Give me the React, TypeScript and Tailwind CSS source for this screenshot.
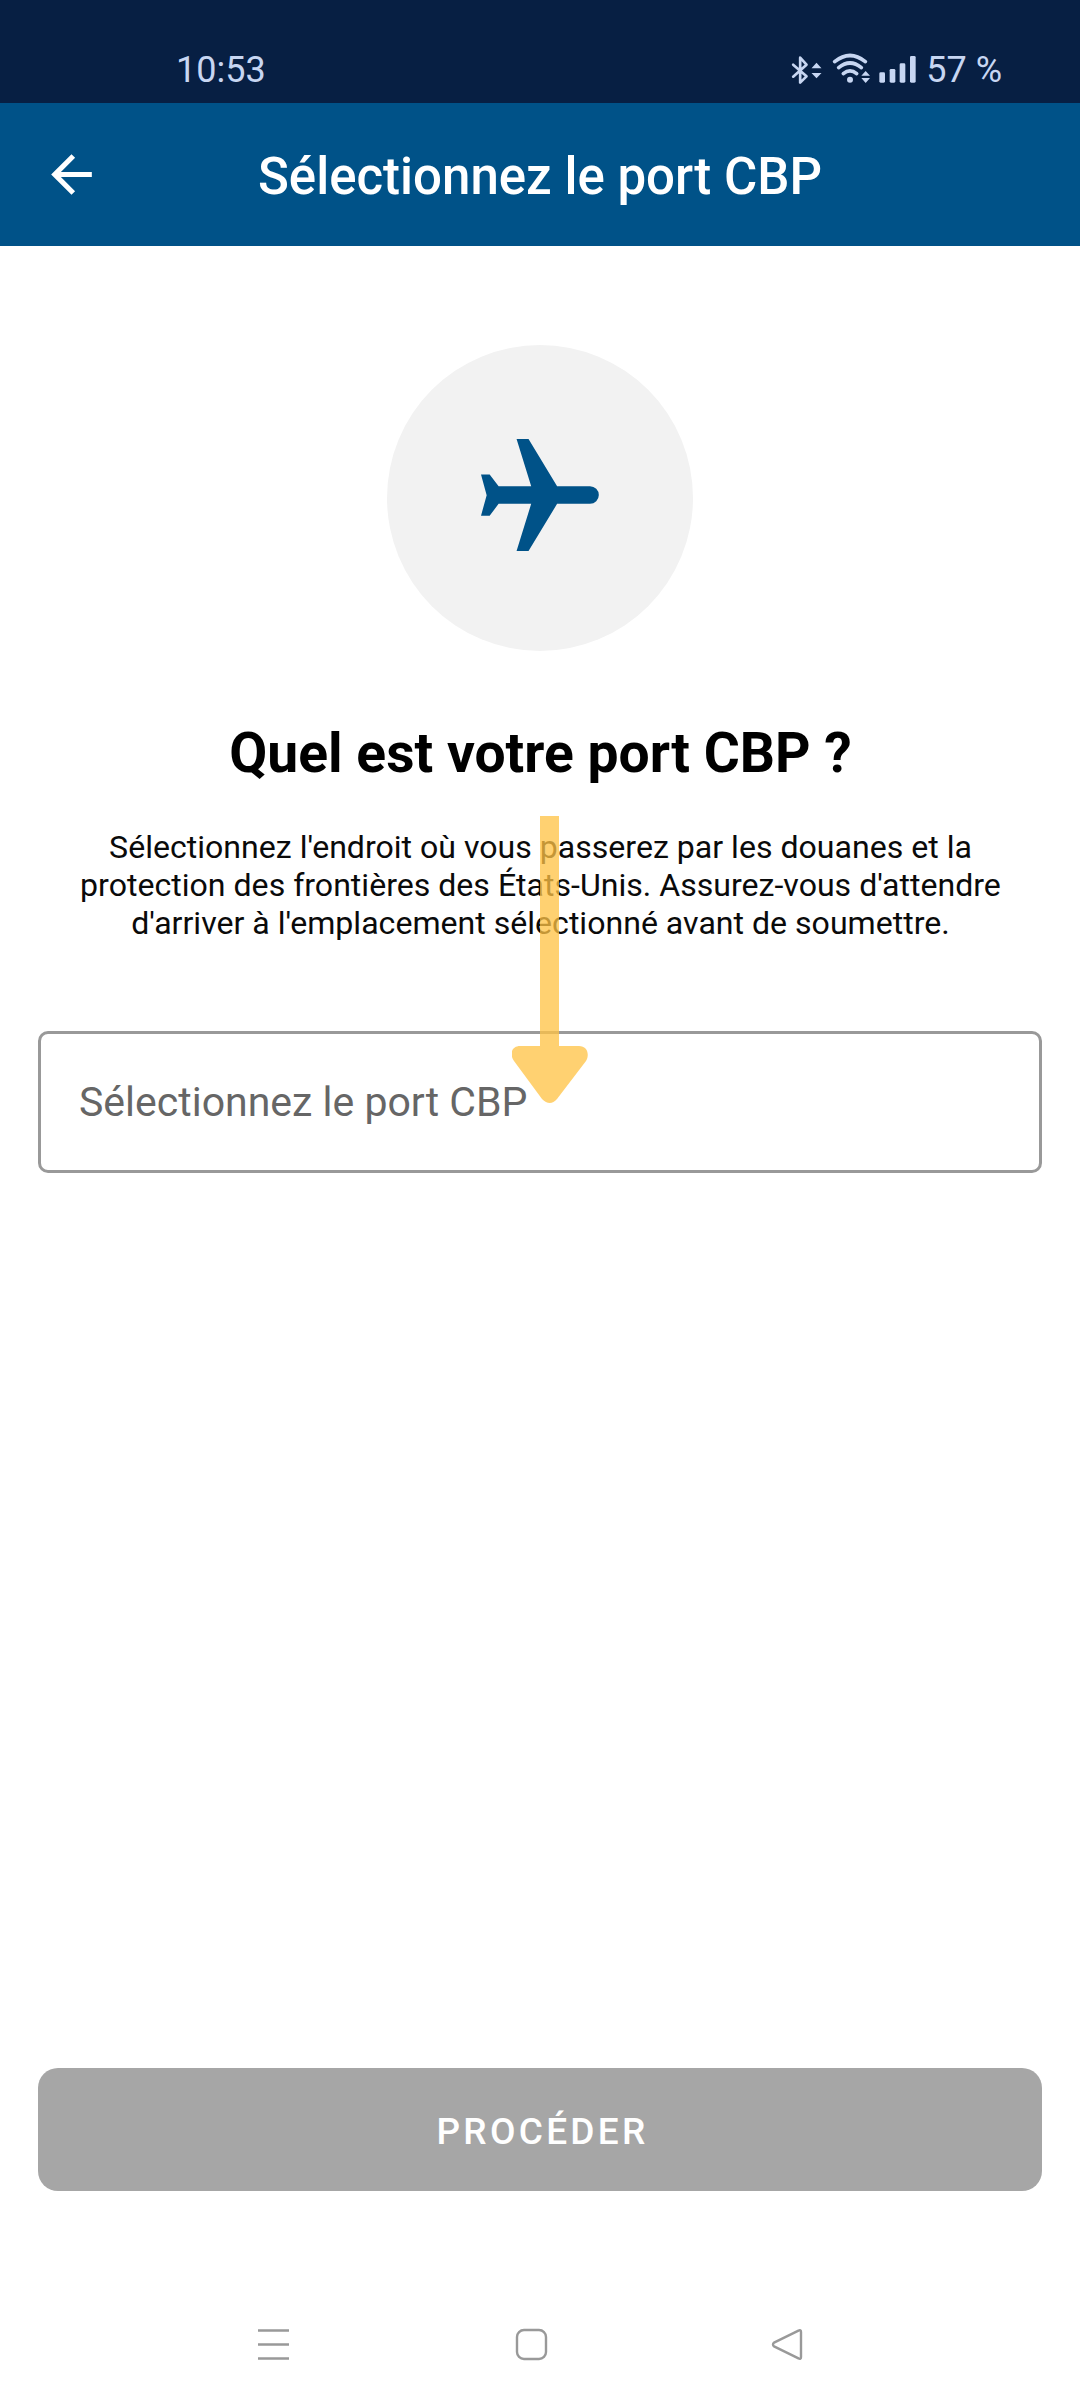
import { MdArrowBack } from "react-icons/md";

const BluetoothIcon = () => (
  <svg viewBox="62 66 92 96" className="h-8 w-[31px]" fill="none">
    <path
      d="M68 98 L108 133 L89 152 V77 L108 98 L68 134"
      stroke="currentColor"
      strokeWidth="8"
      strokeLinejoin="round"
      strokeLinecap="round"
    />
    <path d="M123 109 L138 92 L153 109 Z M123 123 L138 139 L153 123 Z" fill="currentColor" />
  </svg>
);

const WifiIcon = () => (
  <svg viewBox="186 62 117 96" className="h-8 w-[39px]" fill="none">
    <g stroke="currentColor" strokeWidth="11" strokeLinecap="round">
      <path d="M194 91 Q240 54 286 91" />
      <path d="M206 109 Q240 81 274 109" />
      <path d="M220 127 Q240 110 260 127" />
    </g>
    <circle cx="240" cy="145" r="9" fill="currentColor" />
    <path d="M274 133 L287 119 L300 133 Z M274 140 L287 155 L300 140 Z" fill="currentColor" />
  </svg>
);

const SignalIcon = () => (
  <svg viewBox="327 69 111 84" className="h-7 w-[37px]" fill="currentColor">
    <rect x="328" y="121" width="17" height="31" rx="4" />
    <rect x="359" y="111" width="17" height="41" rx="4" />
    <rect x="389" y="94" width="17" height="58" rx="4" />
    <rect x="420" y="72" width="17" height="80" rx="4" />
  </svg>
);

const PlaneIcon = () => (
  <svg viewBox="303 326 355 337" className="mt-[-6px] h-[112px] w-[118px] text-[#005288]">
    <path
      d="M410 326 H446 L532 468 H631 A26.5 26.5 0 0 1 631 521 H532 L446 663 H410 L454 521 H356 L329 557 H303 L320 495 L303 433 H329 L356 468 H454 Z"
      fill="currentColor"
    />
  </svg>
);

const PointerArrow = () => (
  <svg
    viewBox="0 0 76 288"
    className="pointer-events-none absolute top-[816px] left-[512px] h-[288px] w-[76px]"
  >
    <path
      d="M28 0 H47 V230 H67 C75 230 78 238 74 245 L45 283 Q38 291 30 283 L2 245 C-3 238 0 230 8 230 H28 Z"
      fill="#ffc244"
      fillOpacity="0.76"
    />
  </svg>
);

const StatusBar = () => (
  <div className="flex h-[103px] items-center bg-[#071f43] pt-9 pr-[78px] pl-[176px] text-[36px] leading-none text-[#c7d6f2]">
    <span>10:53</span>
    <div className="ml-auto flex items-center">
      <BluetoothIcon />
      <div className="-mt-1 ml-[10px]">
        <WifiIcon />
      </div>
      <div className="-mt-px ml-2">
        <SignalIcon />
      </div>
      <span className="ml-[10.5px]">57 %</span>
    </div>
  </div>
);

const Header = () => (
  <header className="grid h-[143px] grid-cols-[140px_1fr_140px] items-center bg-[#005288] text-white">
    <button aria-label="Retour" className="pl-[41px]">
      <MdArrowBack className="size-[61px]" />
    </button>
    <h1 className="pt-[5px] text-center text-[51px] leading-[60px] font-medium whitespace-nowrap">
      Sélectionnez le port CBP
    </h1>
  </header>
);

const NavigationBar = () => (
  <nav className="mt-[136px] flex h-9 items-center pl-[256px] text-[#999]">
    <svg viewBox="0 0 36 36" className="size-9" fill="none" stroke="currentColor" strokeWidth="2.4">
      <path d="M2 3.5 H33 M2 17.5 H33 M2 31.5 H33" />
    </svg>
    <svg viewBox="0 0 36 36" className="ml-[222px] size-9" fill="none" stroke="currentColor" strokeWidth="2.4">
      <rect x="3" y="3" width="29" height="29" rx="7" />
    </svg>
    <svg
      viewBox="0 0 36 36"
      className="ml-[220px] size-9"
      fill="none"
      stroke="currentColor"
      strokeWidth="2.4"
      strokeLinejoin="round"
    >
      <path d="M28.5 3.6 Q31 2.5 31 5 V30 Q31 32.5 28.5 31.4 L4 19.3 Q2 17.5 4 15.7 Z" />
    </svg>
  </nav>
);

const App = () => {
  return (
    <div className="relative flex h-[2400px] w-[1080px] flex-col overflow-hidden bg-white font-[Roboto,sans-serif]">
      <StatusBar />
      <Header />
      <main className="flex flex-col items-center px-[38px] pt-[99px]">
        <div className="flex size-[306px] items-center justify-center rounded-full bg-[#f2f2f2]">
          <PlaneIcon />
        </div>
        <h2 className="mt-[70px] pl-px text-[55.2px] leading-[64px] font-bold whitespace-nowrap text-black">
          Quel est votre port CBP ?
        </h2>
        <p className="mt-[43px] pl-px text-center text-[32.1px] leading-[38px] whitespace-nowrap text-[#0a0a0a]">
          Sélectionnez l'endroit où vous passerez par les douanes et la
          <br />
          protection des frontières des États-Unis. Assurez-vous d'attendre
          <br />
          d'arriver à l'emplacement sélectionné avant de soumettre.
        </p>
        <div className="mt-[89px] flex h-[142px] w-full items-center rounded-[10px] border-[3px] border-[#999] pl-[38px] text-[41px] leading-none text-[#666]">
          Sélectionnez le port CBP
        </div>
        <button className="mt-[895px] h-[123px] w-full rounded-[20px] bg-[#a6a6a6] pt-[3px] pl-[5px] text-[37px] leading-none font-medium tracking-[3.3px] text-white">
          PROCÉDER
        </button>
      </main>
      <NavigationBar />
      <PointerArrow />
    </div>
  );
};

export default App;
